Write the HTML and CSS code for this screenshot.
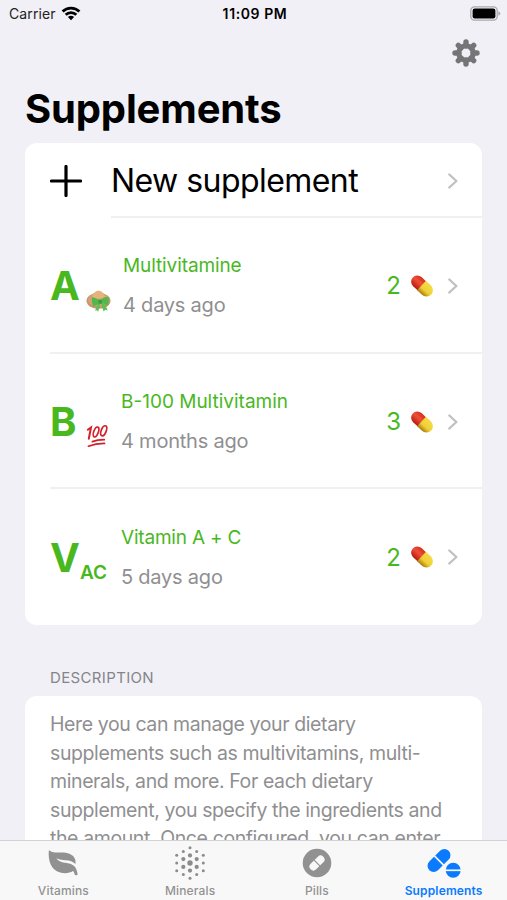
FILE: index.html
```html
<!DOCTYPE html>
<html lang="en">
<head>
    <meta charset="UTF-8">
    <meta name="viewport" content="width=device-width, initial-scale=1.0">
    <title>Supplements</title>
    <link rel="stylesheet" href="styles.css">
</head>
<body>
    <!-- Shared shapes -->
    <svg class="defs" width="0" height="0">
        <defs>
            <linearGradient id="pillRed" x1="0" y1="0" x2="0" y2="1">
                <stop offset="0" stop-color="#d8301c"/>
                <stop offset="0.45" stop-color="#ee4f38"/>
                <stop offset="1" stop-color="#b81c10"/>
            </linearGradient>
            <linearGradient id="pillYellow" x1="0" y1="0" x2="0" y2="1">
                <stop offset="0" stop-color="#f3dc4a"/>
                <stop offset="0.6" stop-color="#efd034"/>
                <stop offset="1" stop-color="#a87812"/>
            </linearGradient>
            <symbol id="pill" viewBox="0 0 24 24">
                <g transform="rotate(43 12 12)">
                    <path d="M12 5.8H5.6a6.2 6.2 0 0 0 0 12.4H12z" fill="url(#pillRed)"/>
                    <path d="M11.4 5.5H18a6.500 6.500 0 0 1 0 13h-6.600z" fill="url(#pillYellow)"/>
                </g>
            </symbol>
            <symbol id="chevron" viewBox="0 0 10 16">
                <path d="M1.300 1.500L8.400 8l-7.100 6.500" fill="none" stroke="#c0c0c3" stroke-width="2.300" stroke-linecap="round" stroke-linejoin="round"/>
            </symbol>
        </defs>
    </svg>

    <div class="app">
        <header class="status-bar">
            <div class="carrier">
                <span>Carrier</span>
                <svg width="20" height="15" viewBox="0 0 20 15" fill="none" stroke="#000" stroke-width="2.8">
                    <path d="M1.6 5.5a12 12 0 0 1 16.8 0"/>
                    <path d="M4.7 8.8a7.6 7.6 0 0 1 10.6 0"/>
                    <path d="M10 14.3L6.9 11.1a4.5 4.5 0 0 1 6.2 0z" fill="#000" stroke="none"/>
                </svg>
            </div>
            <span class="time">11:09 PM</span>
            <svg class="battery" width="31" height="15" viewBox="0 0 31 15">
                <rect x="0.8" y="0.8" width="26.4" height="13.4" rx="3.6" fill="none" stroke="#a9a9ac" stroke-width="1.3"/>
                <rect x="2.6" y="2.6" width="22.8" height="9.8" rx="2.2" fill="#000"/>
                <path d="M28.4 5.2v4.6q1.9-.8 1.9-2.3t-1.9-2.3z" fill="#a9a9ac"/>
            </svg>
        </header>

        <div class="toolbar">
            <svg width="28" height="28" viewBox="-14 -14 28 28">
                <g stroke="#757577" stroke-width="5.4" stroke-linecap="round">
                    <path d="M0-7v-4M0 7v4M-7 0h-4M7 0h4M-5-5l-2.7-2.7M5-5l2.7-2.7M-5 5l-2.7 2.7M5 5l2.7 2.7"/>
                </g>
                <circle r="7.3" fill="none" stroke="#757577" stroke-width="5"/>
            </svg>
        </div>

        <h1>Supplements</h1>

        <main class="content">
            <ul class="card list">
                <li class="row new-row">
                    <svg class="plus" width="32" height="32" viewBox="0 0 32 32">
                        <path d="M16 1.5v29M1.5 16h29" stroke="#000" stroke-width="3.2" stroke-linecap="round"/>
                    </svg>
                    <span class="new-label">New supplement</span>
                    <svg class="chevron"><use href="#chevron"/></svg>
                </li>
                <li class="row item">
                    <div class="symbol wide">
                        <span class="letter">A</span>
                        <!-- hat with a ribbon bow -->
                        <svg class="sub-icon hat" width="25" height="23" viewBox="0 0 25 23">
                            <ellipse cx="12.500" cy="10.800" rx="12" ry="8" fill="#c4946a"/>
                            <ellipse cx="12.500" cy="10" rx="10.700" ry="6.600" fill="#d3a375"/>
                            <path d="M6 7.500C7 3 9.300.8 12.500.8S18 3 19 7.500q-6.500 2-13 0z" fill="#e3b57d"/>
                            <path d="M5.800 6.800q1 .8 2.700 1l5.700 2.700 3.600-3 4.700-.8q1 4.800-.5 8.800l-7-2.700-7.800 4Q5.500 12 5.800 6.800z" fill="#52b84b"/>
                            <path d="M12.300 13L9 20.800l2-.5 1.200 1.400 2.200-8zM15 13l2.600 8.500 1.700-1.700 2.500.7-3.500-7.500z" fill="#5cc055"/>
                            <path d="M12.600 9.700h3.200v4h-3.200z" fill="#389a3c"/>
                        </svg>
                    </div>
                    <div class="info">
                        <span class="name n1">Multivitamine</span>
                        <span class="when">4 days ago</span>
                    </div>
                    <span class="count">2</span>
                    <svg class="pill"><use href="#pill"/></svg>
                    <svg class="chevron"><use href="#chevron"/></svg>
                </li>
                <li class="row item">
                    <div class="symbol">
                        <span class="letter">B</span>
                        <!-- hundred points -->
                        <svg class="sub-icon hundred" width="23" height="24" viewBox="0 0 23 24" fill="none" stroke="#d3202b" stroke-linecap="round">
                            <path d="M1.800 5.700L5 3.500 2.800 14.800" stroke-width="2"/>
                            <ellipse cx="10" cy="8" rx="2.300" ry="5.200" transform="rotate(20 10 8)" stroke-width="1.700"/>
                            <ellipse cx="17.700" cy="6.800" rx="2.500" ry="5.300" transform="rotate(20 17.700 6.800)" stroke-width="1.700"/>
                            <path d="M6.400 17.600Q11 15.900 18.300 15.700" stroke-width="1.700"/>
                            <path d="M2.400 22.200Q10 19.300 18.500 19.400" stroke-width="1.700"/>
                        </svg>
                    </div>
                    <div class="info">
                        <span class="name">B-100 Multivitamin</span>
                        <span class="when">4 months ago</span>
                    </div>
                    <span class="count">3</span>
                    <svg class="pill"><use href="#pill"/></svg>
                    <svg class="chevron"><use href="#chevron"/></svg>
                </li>
                <li class="row item">
                    <div class="symbol">
                        <span class="letter v">V</span>
                        <span class="sub-text">AC</span>
                    </div>
                    <div class="info">
                        <span class="name n3">Vitamin A + C</span>
                        <span class="when">5 days ago</span>
                    </div>
                    <span class="count">2</span>
                    <svg class="pill"><use href="#pill"/></svg>
                    <svg class="chevron"><use href="#chevron"/></svg>
                </li>
            </ul>

            <h2>DESCRIPTION</h2>
            <p class="card description">
                Here you can manage your dietary<br>
                supplements such as multivitamins, multi-<br>
                minerals, and more. For each dietary<br>
                supplement, you specify the ingredients and<br>
                the amount. Once configured, you can enter
            </p>
        </main>

        <nav class="tab-bar">
            <div class="tab">
                <svg width="32" height="34" viewBox="0 0 32 34">
                    <path d="M1.800 4.800C2.500 3.700 3.500 6.300 8 6.500c5 .2 10-.8 15 1.500 4.500 2.200 6 5.500 5.500 10-2.500-2.600-5.500-3.500-10-3.800-4.200-.3-7-.7-9.200-1.900 1.700 2.800 4.700 3.900 8.700 4.400 5.500.7 9 2 10.800 5.500 1 2 1.600 3.800 1.800 5.700.1 1.400-2.600 1.800-3 .3-.3-1.200-.6-2.200-1.500-3.200-3.500 2.200-8 2.800-13 1.500C4 24 1 15 1.800 4.800z" fill="#919191"/>
                </svg>
                <span>Vitamins</span>
            </div>
            <div class="tab">
                <svg width="32" height="34" viewBox="-16 -17 32 34" fill="#8c8c8c">
                    <circle r="2.700"/>
                    <circle cy="-7.600" r="2.100"/><circle cy="7.600" r="2.100"/>
                    <circle cx="-6.700" cy="-3.900" r="2.100"/><circle cx="6.700" cy="-3.900" r="2.100"/>
                    <circle cx="-6.700" cy="3.900" r="2.100"/><circle cx="6.700" cy="3.900" r="2.100"/>
                    <circle cy="-15.300" r="1.500"/><circle cy="15.300" r="1.500"/>
                    <circle cx="-6.700" cy="-11.600" r="1.500"/><circle cx="6.700" cy="-11.600" r="1.500"/>
                    <circle cx="-6.700" cy="11.600" r="1.500"/><circle cx="6.700" cy="11.600" r="1.500"/>
                    <circle cx="-13.300" cy="-7.700" r="1.500"/><circle cx="13.300" cy="-7.700" r="1.500"/>
                    <circle cx="-13.300" r="1.500"/><circle cx="13.300" r="1.500"/>
                    <circle cx="-13.300" cy="7.700" r="1.500"/><circle cx="13.300" cy="7.700" r="1.500"/>
                </svg>
                <span>Minerals</span>
            </div>
            <div class="tab">
                <svg width="32" height="34" viewBox="-16 -17 32 34">
                    <circle r="14.300" fill="#919191"/>
                    <g transform="rotate(-45)">
                        <rect x="-9" y="-3.900" width="18" height="7.800" rx="3.900" fill="#f8f8f8"/>
                        <path d="M0-4v8" stroke="#919191" stroke-width="1.200"/>
                    </g>
                </svg>
                <span>Pills</span>
            </div>
            <div class="tab active">
                <svg width="34" height="34" viewBox="0 0 34 34">
                    <g transform="rotate(-45 12 14.500)">
                        <rect x="-1.700" y="8.400" width="27.400" height="12.200" rx="6.100" fill="#0a7aff"/>
                        <path d="M12 8v13" stroke="#f8f8f8" stroke-width="1.600"/>
                    </g>
                    <circle cx="26.200" cy="24.300" r="7.500" fill="#0a7aff"/>
                    <path d="M18 24.300h16" stroke="#f8f8f8" stroke-width="1.700"/>
                </svg>
                <span>Supplements</span>
            </div>
        </nav>
    </div>
</body>
</html>
```
FILE: styles.css
```css
* {
    box-sizing: border-box;
}
body {
    margin: 0;
    font-family: Inter, "Liberation Sans", sans-serif;
    background-color: #f1f0f6;
    color: #000;
}
svg {
    display: block;
    flex: none;
}
.defs {
    position: absolute;
}
.app {
    width: 507px;
    height: 900px;
    display: flex;
    flex-direction: column;
    overflow: hidden;
}

/* Status bar */
.status-bar {
    display: grid;
    grid-template-columns: 1fr auto 1fr;
    align-items: center;
    height: 27px;
    padding: 0 6px 0 9px;
    font-size: 14px;
    flex: none;
}
.carrier {
    display: flex;
    align-items: center;
    gap: 5px;
    color: #222;
    letter-spacing: 0.1px;
}
.time {
    font-weight: 600;
    letter-spacing: 0.6px;
}
.battery {
    justify-self: end;
}

.toolbar {
    display: flex;
    justify-content: flex-end;
    align-items: center;
    height: 51px;
    padding-right: 27px;
    flex: none;
}
h1 {
    margin: 0;
    height: 65px;
    padding-left: 25px;
    font-size: 40px;
    line-height: 62px;
    font-weight: 700;
    letter-spacing: -0.15px;
    flex: none;
}

/* Cards */
.content {
    flex: 1;
    min-height: 0;
    overflow: hidden;
    padding: 0 25px;
}
.card {
    margin: 0;
    background-color: #fff;
    border-radius: 12px;
}
.list {
    padding: 0 0 0 25px;
    list-style: none;
}
.row {
    display: flex;
    align-items: center;
    height: 135.7px;
    padding-right: 24px;
    background: linear-gradient(#f0f0f2, #f0f0f2) left bottom / 100% 2px no-repeat;
}
.row:last-child {
    background: none;
}
.new-row {
    height: 75px;
    background-position: 61px bottom;
}
.new-label {
    flex: 1;
    margin-left: 29px;
    font-size: 32px;
    letter-spacing: -0.55px;
}
.chevron {
    width: 10px;
    height: 16px;
}
.symbol {
    display: flex;
    align-items: center;
    width: 71px;
    height: 60px;
    color: #49b81e;
}
.symbol.wide {
    width: 73px;
}
.letter {
    font-size: 40px;
    font-weight: 700;
}
.letter.v {
    letter-spacing: -1px;
}
.sub-icon {
    margin-top: 30px;
}
.hat {
    margin: 32px 0 0 6px;
}
.hundred {
    margin: 28px 0 0 10px;
}
.sub-text {
    margin: 30px 0 0 1px;
    font-size: 19px;
    font-weight: 600;
}
.info {
    display: flex;
    flex-direction: column;
    flex: 1;
    gap: 16px;
    line-height: 24px;
}
.name {
    color: #49b81e;
    font-size: 19px;
}
.n1 {
    letter-spacing: -0.1px;
}
.n3 {
    letter-spacing: -0.2px;
}
.when {
    margin-top: -1px;
    color: #8f8f91;
    font-size: 20px;
    letter-spacing: -0.22px;
}
.count {
    color: #49b81e;
    font-size: 24px;
}
.pill {
    width: 24px;
    height: 24px;
    margin: 0 14px 0 9px;
}

h2 {
    margin: 0;
    padding: 41px 0 6px 25px;
    font-size: 15px;
    line-height: 24px;
    font-weight: 400;
    letter-spacing: 0.35px;
    color: #858589;
}
.description {
    padding: 14px 0 20px 25px;
    color: #8f8f91;
    font-size: 19.5px;
    line-height: 28.6px;
    letter-spacing: -0.4px;
    white-space: nowrap;
}

/* Bottom tabs */
.tab-bar {
    display: grid;
    grid-template-columns: repeat(4, 1fr);
    height: 60px;
    border-top: 1px solid #d2d2d5;
    background-color: #f8f8f8;
    flex: none;
}
.tab {
    display: flex;
    flex-direction: column;
    align-items: center;
    padding-top: 5px;
    color: #929292;
    font-size: 12px;
    line-height: 22px;
    font-weight: 500;
    letter-spacing: 0.15px;
}
.tab.active {
    color: #0a7aff;
    font-weight: 600;
}
```
